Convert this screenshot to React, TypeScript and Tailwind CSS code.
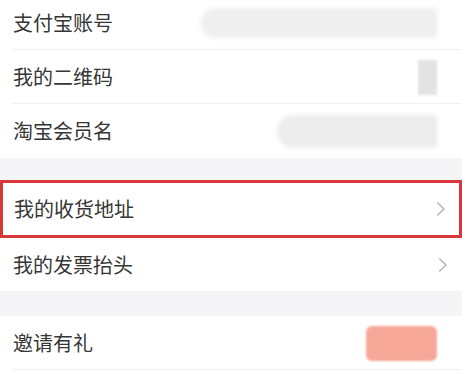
import React from "react";

const font = { fontFamily: '"Noto Sans CJK SC", "Noto Sans", sans-serif' };

function Chevron() {
  return (
    <svg width="10" height="14" viewBox="0 0 10 14" className="mr-[13px]">
      <path d="M1.8 1 L8 7 L1.8 13" fill="none" stroke="#b5b5b5" strokeWidth="1.5" strokeLinecap="round" strokeLinejoin="round" />
    </svg>
  );
}

export default function App() {
  return (
    <div className="w-[462px] h-[384px] bg-white overflow-hidden text-[#363636]" style={font}>
      {/* group 1 */}
      <div className="flex flex-col">
        <div className="relative flex items-center justify-between h-[50px] pl-[13px] pr-[25px] pb-[4px]">
          <span className="text-[20px] leading-none">支付宝账号</span>
          <div className="w-[236px] h-[30px] rounded-l-[14px] bg-[#efefef] blur-[2px]" />
          <div className="absolute left-[12px] right-0 bottom-0 h-px bg-[#f0f0f0]" />
        </div>
        <div className="relative flex items-center justify-between h-[54px] pl-[13px] pr-[25px]">
          <span className="text-[20px] leading-none">我的二维码</span>
          <div className="w-[19px] h-[35px] bg-[#e3e3e3] blur-[1px]" />
          <div className="absolute left-[12px] right-0 bottom-0 h-px bg-[#f0f0f0]" />
        </div>
        <div className="flex items-center justify-between h-[54px] pl-[13px] pr-[25px]">
          <span className="text-[20px] leading-none">淘宝会员名</span>
          <div className="w-[160px] h-[33px] rounded-l-[16px] bg-[#ececec] blur-[2px]" />
        </div>
      </div>

      <div className="h-[22px] bg-[#f5f4f6]" />

      {/* group 2 */}
      <div className="flex flex-col">
        <div className="flex items-center justify-between h-[58px] pl-[11px] border-[3px] border-[#d8383a] pb-[1px]">
          <span className="text-[20px] leading-none">我的收货地址</span>
          <Chevron />
        </div>
        <div className="flex items-center justify-between h-[53px] pl-[13px]">
          <span className="text-[20px] leading-none">我的发票抬头</span>
          <div className="mr-[1px]"><Chevron /></div>
        </div>
      </div>

      <div className="h-[25px] bg-[#f5f4f6]" />

      {/* group 3 */}
      <div className="relative flex items-center justify-between h-[54px] pl-[13px] pr-[25px]">
        <span className="text-[20px] leading-none">邀请有礼</span>
        <div className="w-[71px] h-[35px] rounded-[6px] bg-[#f6a797] blur-[1px]" />
        <div className="absolute left-[12px] right-0 bottom-0 h-px bg-[#f0f0f0]" />
      </div>
    </div>
  );
}
